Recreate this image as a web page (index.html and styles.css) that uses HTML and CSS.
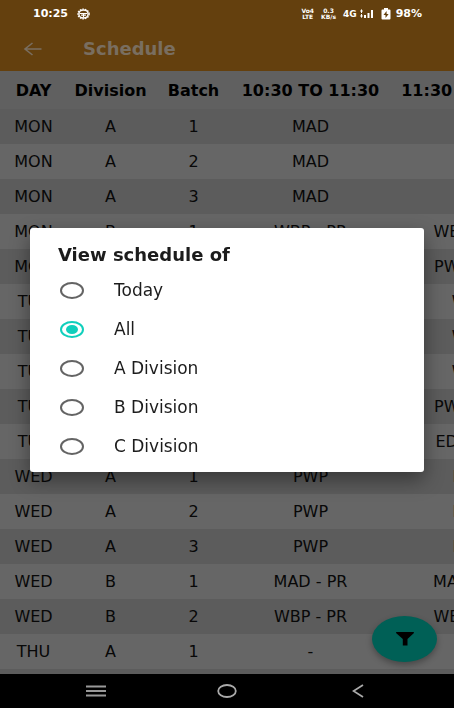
FILE: index.html
```html
<!DOCTYPE html>
<html lang="en">
<head>
<meta charset="utf-8">
<meta name="viewport" content="width=device-width, initial-scale=1">
<title>Schedule</title>
<link rel="stylesheet" href="styles.css">
</head>
<body>
<div class="app">
  <header class="top">
    <div class="status">
      <span class="clock">10:25</span>
      <svg class="gear" viewBox="0 0 14 12" width="13" height="12" aria-hidden="true">
        <ellipse cx="7" cy="6" rx="5" ry="4.300" fill="none" stroke="#fff" stroke-width="1.6"/>
        <ellipse cx="7" cy="6" rx="6.200" ry="5.300" fill="none" stroke="#fff" stroke-width="1.2" stroke-dasharray="1.6 1.2"/>
        <path d="M3 5.4h8M7 5.4v4.4M4.4 7.2h5.2" stroke="#fff" stroke-width="1.2"/>
      </svg>
      <span class="tiny lte">Vo4<br>LTE</span>
      <span class="tiny speed">0.3<br>KB/s</span>
      <span class="network">4G</span>
      <svg class="signal" viewBox="0 0 14 10" width="14" height="10" aria-hidden="true">
        <path d="M1.5 0L3 2.5H0zM1.5 9L0 6.500H3zM1 2h1v2H1zM1 5h1v2H1zM4 6h2v3H4zM7.500 4h2v5h-2zM11 1h2v8h-2z" fill="#fff"/>
      </svg>
      <svg class="battery" viewBox="0 0 10 12" width="10" height="12" aria-hidden="true">
        <path d="M3 0h4v1.500h1.500q1 0 1 1V10.500q0 1-1 1h-7q-1 0-1-1v-8q0-1 1-1H3z" fill="#fff"/>
        <path d="M5.600 3L2.500 7h2v3L7.600 6h-2z" fill="#64400e"/>
      </svg>
      <span class="percent">98%</span>
    </div>
    <div class="bar">
      <button class="back" type="button" aria-label="Back">
        <svg viewBox="0 0 20 14" width="20" height="14" aria-hidden="true"><path d="M18.500 7H2M9.500 1L2 7L9.500 13" fill="none" stroke="#796e60" stroke-width="1.6"/></svg>
      </button>
      <h1>Schedule</h1>
    </div>
  </header>
  <main class="content">
    <table>
      <colgroup><col class="c-day"><col class="c-division"><col class="c-batch"><col class="c-slot"><col class="c-next"></colgroup>
      <thead><tr><th>DAY</th><th>Division</th><th>Batch</th><th>10:30 TO 11:30</th><th>11:30 TO 12:30</th></tr></thead>
      <tbody>
        <tr><td>MON</td><td>A</td><td>1</td><td>MAD</td><td></td></tr>
        <tr><td>MON</td><td>A</td><td>2</td><td>MAD</td><td></td></tr>
        <tr><td>MON</td><td>A</td><td>3</td><td>MAD</td><td></td></tr>
        <tr><td>MON</td><td>B</td><td>1</td><td>WBP - PR</td><td>WBP - PR</td></tr>
        <tr><td>MON</td><td></td><td></td><td></td><td>PWP - PR</td></tr>
        <tr><td>TUE</td><td></td><td></td><td></td><td>WBP</td></tr>
        <tr><td>TUE</td><td></td><td></td><td></td><td>WBP</td></tr>
        <tr><td>TUE</td><td></td><td></td><td></td><td>WBP</td></tr>
        <tr><td>TUE</td><td></td><td></td><td></td><td>PWP - PR</td></tr>
        <tr><td>TUE</td><td></td><td></td><td></td><td>EDE - PR</td></tr>
        <tr><td>WED</td><td>A</td><td>1</td><td>PWP</td><td>PWP</td></tr>
        <tr><td>WED</td><td>A</td><td>2</td><td>PWP</td><td>PWP</td></tr>
        <tr><td>WED</td><td>A</td><td>3</td><td>PWP</td><td>PWP</td></tr>
        <tr><td>WED</td><td>B</td><td>1</td><td>MAD - PR</td><td>MAD - PR</td></tr>
        <tr><td>WED</td><td>B</td><td>2</td><td>WBP - PR</td><td>WBP - PR</td></tr>
        <tr><td>THU</td><td>A</td><td>1</td><td>-</td><td></td></tr>
        <tr><td></td><td></td><td></td><td></td><td></td></tr>
      </tbody>
    </table>
    <button class="fab" type="button" aria-label="Filter">
      <svg viewBox="0 0 18 14" width="18" height="14" aria-hidden="true"><path d="M.5 0h17q.8.500.2 1.200L11.500 7v6.500H6.800V7L.3 1.200Q-.3.500.5 0z" fill="#000"/></svg>
    </button>
  </main>
  <nav class="system">
    <button type="button" aria-label="Recent apps"><svg viewBox="0 0 20 12" width="20" height="12" aria-hidden="true"><path d="M0 1.500h20M0 6h20M0 10.500h20" stroke="#999" stroke-width="1.800"/></svg></button>
    <button type="button" aria-label="Home"><svg viewBox="0 0 20 14" width="20" height="14" aria-hidden="true"><ellipse cx="10" cy="7" rx="8.800" ry="6" fill="none" stroke="#aaa" stroke-width="1.800"/></svg></button>
    <button type="button" aria-label="Back"><svg viewBox="0 0 12 14" width="12" height="14" aria-hidden="true"><path d="M11 1L1.500 7l9.500 6" fill="none" stroke="#aaa" stroke-width="1.800"/></svg></button>
  </nav>
</div>
<div class="overlay">
  <form class="dialog" role="dialog" aria-labelledby="dialog-title">
    <h2 id="dialog-title">View schedule of</h2>
    <label><input type="radio" name="view"><span>Today</span></label>
    <label><input type="radio" name="view" checked><span>All</span></label>
    <label><input type="radio" name="view"><span>A Division</span></label>
    <label><input type="radio" name="view"><span>B Division</span></label>
    <label><input type="radio" name="view"><span>C Division</span></label>
  </form>
</div>
</body>
</html>
```
FILE: styles.css
```css
* { box-sizing: border-box; }

body {
  margin: 0;
  font-family: "DejaVu Sans", sans-serif;
  color: #080808;
  background: #000;
}

button { border: 0; padding: 0; background: none; display: flex; align-items: center; justify-content: center; }
svg { display: block; }

.app { height: 100vh; display: flex; flex-direction: column; overflow: hidden; }

.top { background: #64400e; flex: none; }

.status {
  height: 27px;
  padding: 0 32px 0 33px;
  display: flex;
  align-items: center;
  color: #fff;
  font-size: 11px;
  font-weight: bold;
}
.gear { margin-left: 9px; }
.tiny { font-size: 6px; line-height: 6px; text-align: center; }
.lte { margin-left: auto; }
.speed { margin-left: 7px; }
.network { margin-left: 7px; font-size: 9px; }
.signal { margin-left: 3px; }
.battery { margin: 0 5px 0 7px; }

.bar { height: 44px; display: flex; align-items: center; padding-left: 23px; }
.back { width: 20px; height: 40px; }
.bar h1 { margin: 0 0 0 40px; font-size: 18px; line-height: 24px; color: #796e60; }

.content { flex: 1; min-height: 0; overflow: hidden; position: relative; background: #666; }

table { table-layout: fixed; width: 549px; border-collapse: collapse; font-size: 16px; }
.c-day { width: 64px; }
.c-division { width: 93px; }
.c-batch { width: 73px; }
.c-slot { width: 161px; }
.c-next { width: 158px; }
th, td { height: 35px; padding: 0; text-align: center; white-space: nowrap; }
th { height: 38px; color: #000; background: #606060; }
th:first-child, td:first-child { padding-left: 3px; }
tbody tr:nth-child(odd) { background: #5c5c5c; }

.fab {
  position: absolute;
  right: 17px;
  bottom: 12px;
  width: 65px;
  height: 46px;
  border-radius: 50%;
  background: #006056;
  box-shadow: 0 3px 6px rgba(0, 0, 0, .3);
}

.system { height: 34px; flex: none; background: #000; display: flex; justify-content: space-between; padding: 0 60px; }
.system button { width: 72px; }

.overlay {
  position: fixed;
  inset: 25px 0 34px;
  display: flex;
  align-items: center;
  padding: 0 30px;
}
.dialog {
  flex: 1;
  padding: 12px 28px 6px;
  background: #fff;
  border-radius: 3px;
  box-shadow: 0 8px 20px rgba(0, 0, 0, .4);
  color: #1c1c1c;
}
.dialog h2 { margin: 0 0 2px; font-size: 18px; line-height: 29px; }
.dialog label { display: flex; align-items: center; height: 39px; font-size: 17px; }
.dialog input {
  appearance: none;
  flex: none;
  display: grid;
  place-items: center;
  width: 24px;
  height: 17px;
  margin: 0 30px 0 2px;
  border: 2px solid #646464;
  border-radius: 50%;
}
.dialog input:checked { border-color: #10cfbc; }
.dialog input:checked::before {
  content: "";
  width: 12px;
  height: 9px;
  border-radius: 50%;
  background: #10cfbc;
}
```
